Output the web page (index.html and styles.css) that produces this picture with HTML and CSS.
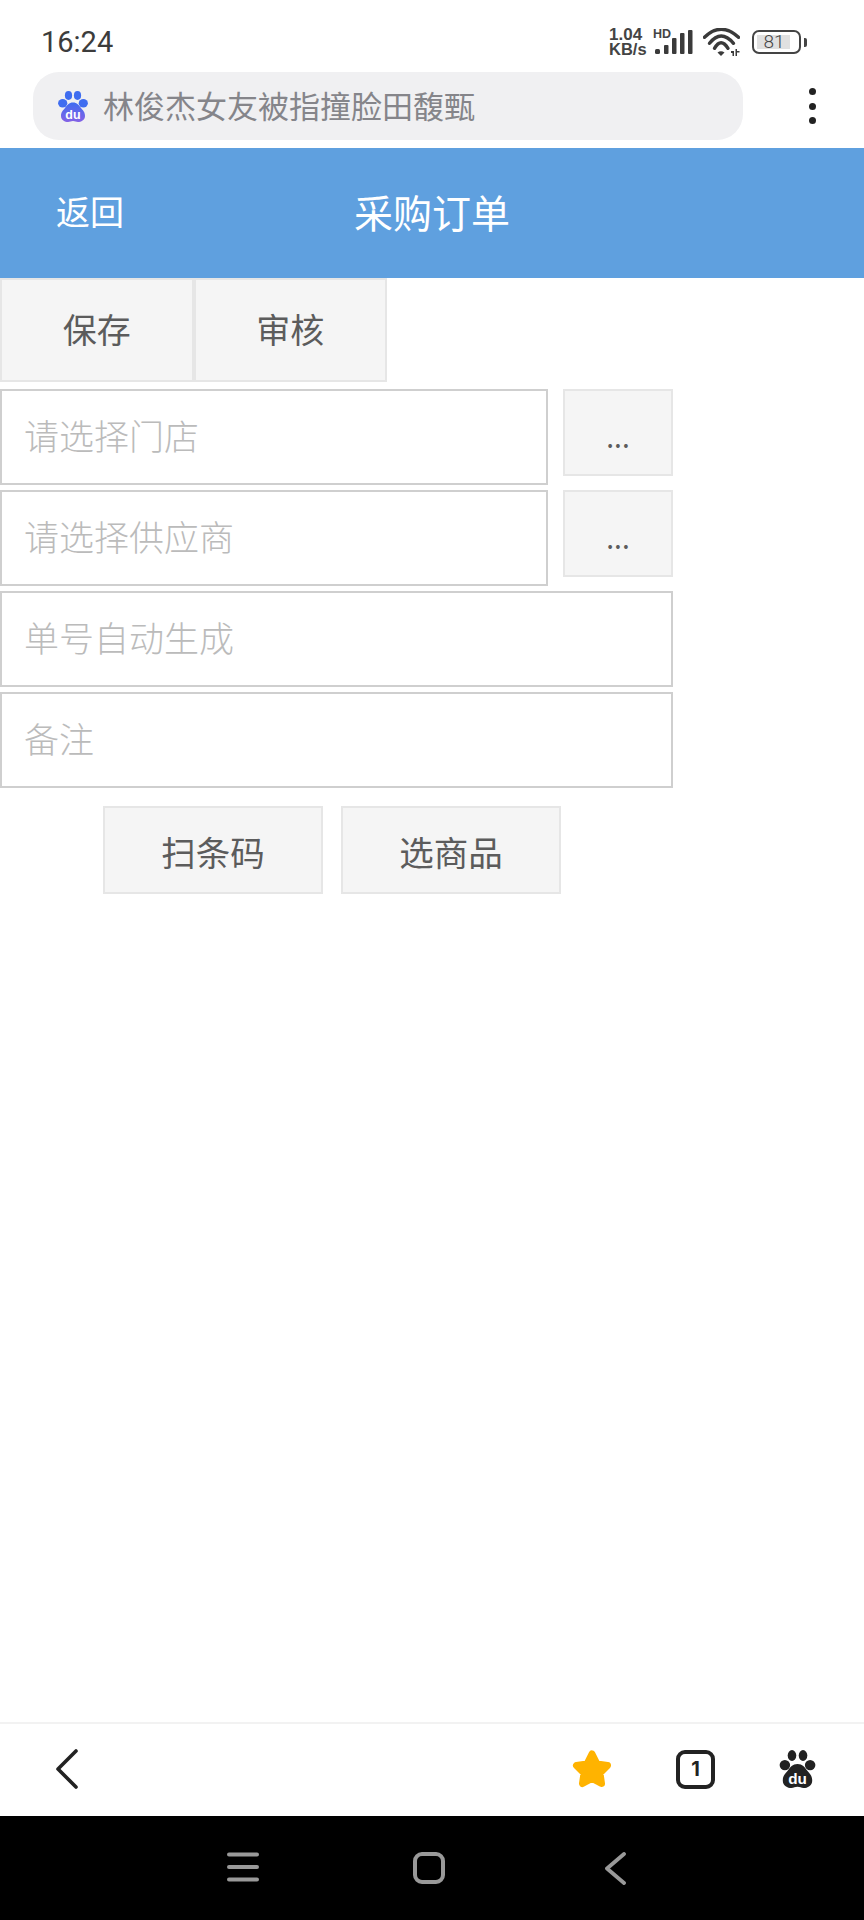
FILE: index.html
```html
<!DOCTYPE html>
<html lang="zh-CN">
<head>
<meta charset="utf-8">
<title>采购订单</title>
<link rel="stylesheet" href="styles.css">
</head>
<body>
<svg class="defs" width="0" height="0" aria-hidden="true">
  <defs>
    <linearGradient id="duGrad" x1="0" y1="0" x2="0" y2="1">
      <stop offset="0" stop-color="#3f6df0"/>
      <stop offset="1" stop-color="#8462e6"/>
    </linearGradient>
  </defs>
</svg>

<div class="status">
  <span class="time">16:24</span>
  <div class="status-right">
    <div class="speed"><span>1.04</span><span>KB/s</span></div>
    <svg class="signal" width="42" height="28" viewBox="0 0 42 28">
      <text x="0" y="9.500" class="hd">HD</text>
      <rect x="2" y="21" width="5" height="5" rx="1.500"/>
      <rect x="11" y="17" width="4.500" height="9" rx="1"/>
      <rect x="19" y="10" width="4.500" height="16" rx="1"/>
      <rect x="27" y="5" width="4.500" height="21" rx="1"/>
      <rect x="35" y="2" width="4.500" height="24" rx="1"/>
    </svg>
    <svg class="wifi" width="37" height="29" viewBox="0 0 37 29">
      <g fill="none" stroke="#3a3a3a" stroke-width="3.400" stroke-linecap="round">
        <path d="M1.500 9.300Q18 -6.700 35.500 9.300"/>
        <path d="M6.500 15.300Q18 .7 30.500 15.300"/>
        <path d="M11.500 20.300Q18 9.100 25 20.300"/>
      </g>
      <path d="M14.500 24.500Q18 22 21.500 24.500L18 28Z" fill="#3a3a3a"/>
      <path d="M28 23h3v5h-1.500v-3H28zM32.500 21h1.500v2h2.500v1.500H34V28h-1.500z" fill="#3a3a3a"/>
    </svg>
    <div class="battery"><div class="battery-fill" style="width:33px"></div><span class="battery-num">81</span></div>
    <div class="battery-nub"></div>
  </div>
</div>

<div class="urlrow">
  <div class="urlpill">
    <svg class="du-logo" width="30" height="31" viewBox="0 0 30 31">
      <g fill="#3f6df0">
        <ellipse cx="4.700" cy="12.300" rx="4.600" ry="4.200"/>
        <ellipse cx="10.500" cy="4.500" rx="3.600" ry="4.400"/>
        <ellipse cx="19.500" cy="4.500" rx="3.600" ry="4.400"/>
        <ellipse cx="25.300" cy="12.300" rx="4.600" ry="4.200"/>
      </g>
      <path d="M15 11.500C19 11.500 21 14 23 17C25 19.500 27 21 27 25C27 29 23 31 20 31C18 31 17 30 15 30C13 30 12 31 10 31C7 31 3 29 3 25C3 21 5 19.500 7 17C9 14 11 11.500 15 11.500Z" fill="url(#duGrad)"/>
      <text x="15" y="27.500" class="du-text">du</text>
    </svg>
    <span class="urltext">林俊杰女友被指撞脸田馥甄</span>
  </div>
  <div class="more"><i></i><i></i><i></i></div>
</div>

<header class="appbar">
  <span class="back-link">返回</span>
  <span class="title">采购订单</span>
</header>

<main class="page">
  <div class="toolbar">
    <button class="btn tool">保存</button>
    <button class="btn tool">审核</button>
  </div>
  <div class="form">
    <div class="row">
      <input class="field short" placeholder="请选择门店">
      <button class="btn pick">...</button>
    </div>
    <div class="row">
      <input class="field short" placeholder="请选择供应商">
      <button class="btn pick">...</button>
    </div>
    <input class="field" placeholder="单号自动生成">
    <input class="field" placeholder="备注">
  </div>
  <div class="actions">
    <button class="btn action">扫条码</button>
    <button class="btn action">选商品</button>
  </div>
</main>

<nav class="browserbar">
  <svg class="chev" width="24" height="42" viewBox="0 0 24 42">
    <path d="M21 3L3 21L21 39" fill="none" stroke="#222" stroke-width="3.600" stroke-linecap="round" stroke-linejoin="round"/>
  </svg>
  <div class="bar-right">
    <svg class="star" width="40" height="38" viewBox="0 0 40 38">
      <path d="M20 4L25 14L35.500 15.500L28 23L29.500 33.500L20 28.500L10.500 33.500L12 23L4.500 15.500L15 14Z" fill="#ffb300" stroke="#ffb300" stroke-width="7" stroke-linejoin="round"/>
    </svg>
    <div class="tabs">1</div>
    <svg class="paw" width="37" height="38" viewBox="0 0 30 31">
      <g fill="#222">
        <ellipse cx="4.700" cy="12.300" rx="4.300" ry="4.200"/>
        <ellipse cx="10.500" cy="4.500" rx="3.500" ry="4.400"/>
        <ellipse cx="19.500" cy="4.500" rx="3.500" ry="4.400"/>
        <ellipse cx="25.300" cy="12.300" rx="4.300" ry="4.200"/>
        <path d="M15 11.500C19 11.500 21 14 23 17C25 19.500 27 21 27 25C27 29 23 31 20 31C18 31 17 30 15 30C13 30 12 31 10 31C7 31 3 29 3 25C3 21 5 19.500 7 17C9 14 11 11.500 15 11.500Z"/>
      </g>
      <text x="15" y="27.500" class="du-text">du</text>
    </svg>
  </div>
</nav>

<div class="sysnav">
  <svg class="nav-menu" width="32" height="30" viewBox="0 0 32 30">
    <path d="M2 2.500H30M2 15H30M2 27.500H30" fill="none" stroke="#999" stroke-width="4" stroke-linecap="round"/>
  </svg>
  <svg class="nav-home" width="32" height="32" viewBox="0 0 32 32">
    <rect x="2" y="2" width="28" height="28" rx="7" fill="none" stroke="#999" stroke-width="4"/>
  </svg>
  <svg class="nav-back" width="21" height="33" viewBox="0 0 21 33">
    <path d="M19 2L2 16.500L19 31" fill="none" stroke="#999" stroke-width="3.800" stroke-linecap="round" stroke-linejoin="round"/>
  </svg>
</div>
</body>
</html>
```

FILE: styles.css
```css
* { box-sizing: border-box; }

html, body { margin: 0; padding: 0; }

body {
  width: 864px;
  height: 1920px;
  display: flex;
  flex-direction: column;
  background: #fff;
  font-family: "Noto Sans CJK SC", "Noto Sans", sans-serif;
  overflow: hidden;
}

.defs { position: absolute; }

/* status bar */
.status {
  height: 72px;
  padding: 12px 57px 0 41px;
  display: flex;
  align-items: center;
  justify-content: space-between;
}

.time {
  font-family: "Roboto", sans-serif;
  font-size: 29px;
  color: #3c3c3c;
  margin-top: -1px;
}

.status-right { display: flex; align-items: center; }

.speed {
  width: 44px;
  display: flex;
  flex-direction: column;
  font-family: "Liberation Sans", sans-serif;
  font-weight: 700;
  font-size: 16.500px;
  line-height: 14px;
  color: #444;
}

.speed span { display: block; height: 14px; }

.speed span:first-child { font-size: 17px; }

.signal { display: block; }
.signal rect { fill: #3a3a3a; }

.hd {
  font-family: "Liberation Sans", sans-serif;
  font-size: 12.500px;
  font-weight: 700;
  fill: #444;
}

.wifi { margin-left: 8px; display: block; }

.battery {
  position: relative;
  width: 49px;
  height: 24px;
  margin-left: 12px;
  border: 2.500px solid #444;
  border-radius: 7px;
  display: flex;
  align-items: center;
  padding-left: 2.500px;
}

.battery-fill { height: 14px; background: #e0e0e0; }

.battery-num {
  position: absolute;
  inset: 0 5px 0 0;
  text-align: center;
  font-family: "Roboto", sans-serif;
  font-size: 19px;
  line-height: 19px;
  font-weight: 300;
  color: #444;
}

.battery-nub {
  width: 3px;
  height: 9px;
  margin-left: 3px;
  background: #444;
  border-radius: 0 2px 2px 0;
}

/* url row */
.urlrow {
  height: 76px;
  padding-left: 33px;
  display: flex;
  align-items: flex-start;
}

.urlpill {
  width: 710px;
  height: 68px;
  background: #f0f0f2;
  border-radius: 26px;
  display: flex;
  align-items: center;
  padding-left: 25px;
}

.du-logo { display: block; flex: none; }

.du-text {
  font-family: "Liberation Sans", sans-serif;
  font-size: 12.500px;
  font-weight: 700;
  fill: #fff;
  text-anchor: middle;
}

.urltext {
  margin-left: 15px;
  padding-bottom: 4px;
  font-size: 31px;
  color: #85858a;
  white-space: nowrap;
}

.more {
  margin-left: 66px;
  height: 68px;
  display: flex;
  flex-direction: column;
  justify-content: center;
  gap: 7.500px;
}

.more i {
  display: block;
  width: 7px;
  height: 7px;
  border-radius: 50%;
  background: #222;
}

/* app header */
.appbar {
  height: 130px;
  flex: none;
  background: #5fa0df;
  color: #fff;
  display: grid;
  grid-template-columns: 1fr auto 1fr;
  align-items: center;
  padding: 0 0 5px 56px;
}

.back-link { font-size: 34px; }

.title {
  font-size: 39px;
  margin-left: -56px;
}

/* page */
.page { flex: 1; }

.btn {
  font-family: inherit;
  background: #f5f5f5;
  border: 2px solid #e6e6e6;
  color: #5c5c5c;
  cursor: pointer;
}

.toolbar { display: flex; height: 104px; }

.tool {
  width: 193.500px;
  padding: 0 0 4px;
  font-size: 34px;
}

.form {
  width: 673px;
  margin-top: 7px;
  display: flex;
  flex-direction: column;
  gap: 5px;
}

.row {
  display: flex;
  justify-content: space-between;
  align-items: flex-start;
}

.field {
  display: block;
  width: 100%;
  height: 96px;
  padding: 0 22px 5px;
  border: 2px solid #cfcfcf;
  background: #fff;
  font-family: inherit;
  font-size: 35px;
  font-weight: 300;
  outline: none;
}

.field::placeholder { color: #bbb; opacity: 1; }

.field.short { width: 548px; }

.pick {
  width: 110px;
  height: 87px;
  padding: 7px 0 0;
  font-size: 28px;
}

.actions {
  margin: 18px 0 0 103px;
  display: flex;
  gap: 18px;
}

.action {
  width: 220px;
  height: 88px;
  padding: 2px 0 0;
  font-size: 34.500px;
}

/* browser bottom bar */
.browserbar {
  height: 94px;
  flex: none;
  border-top: 2px solid #f2f2f2;
  display: flex;
  align-items: center;
  justify-content: space-between;
  padding: 0 48px 2px 55px;
}

.chev { display: block; }

.bar-right { display: flex; align-items: center; }

.star { display: block; }

.tabs {
  width: 39px;
  height: 39px;
  margin-left: 64px;
  border: 4px solid #222;
  border-radius: 9px;
  display: flex;
  align-items: center;
  justify-content: center;
  font-family: "Inter", sans-serif;
  font-size: 20px;
  font-weight: 700;
  color: #222;
}

.paw { display: block; margin-left: 64px; }

/* android nav */
.sysnav {
  height: 104px;
  flex: none;
  background: #000;
  display: flex;
  align-items: flex-start;
  padding: 36px 0 0 227px;
}

.nav-home { margin-left: 154px; }
.nav-back { margin-left: 160px; }
```
